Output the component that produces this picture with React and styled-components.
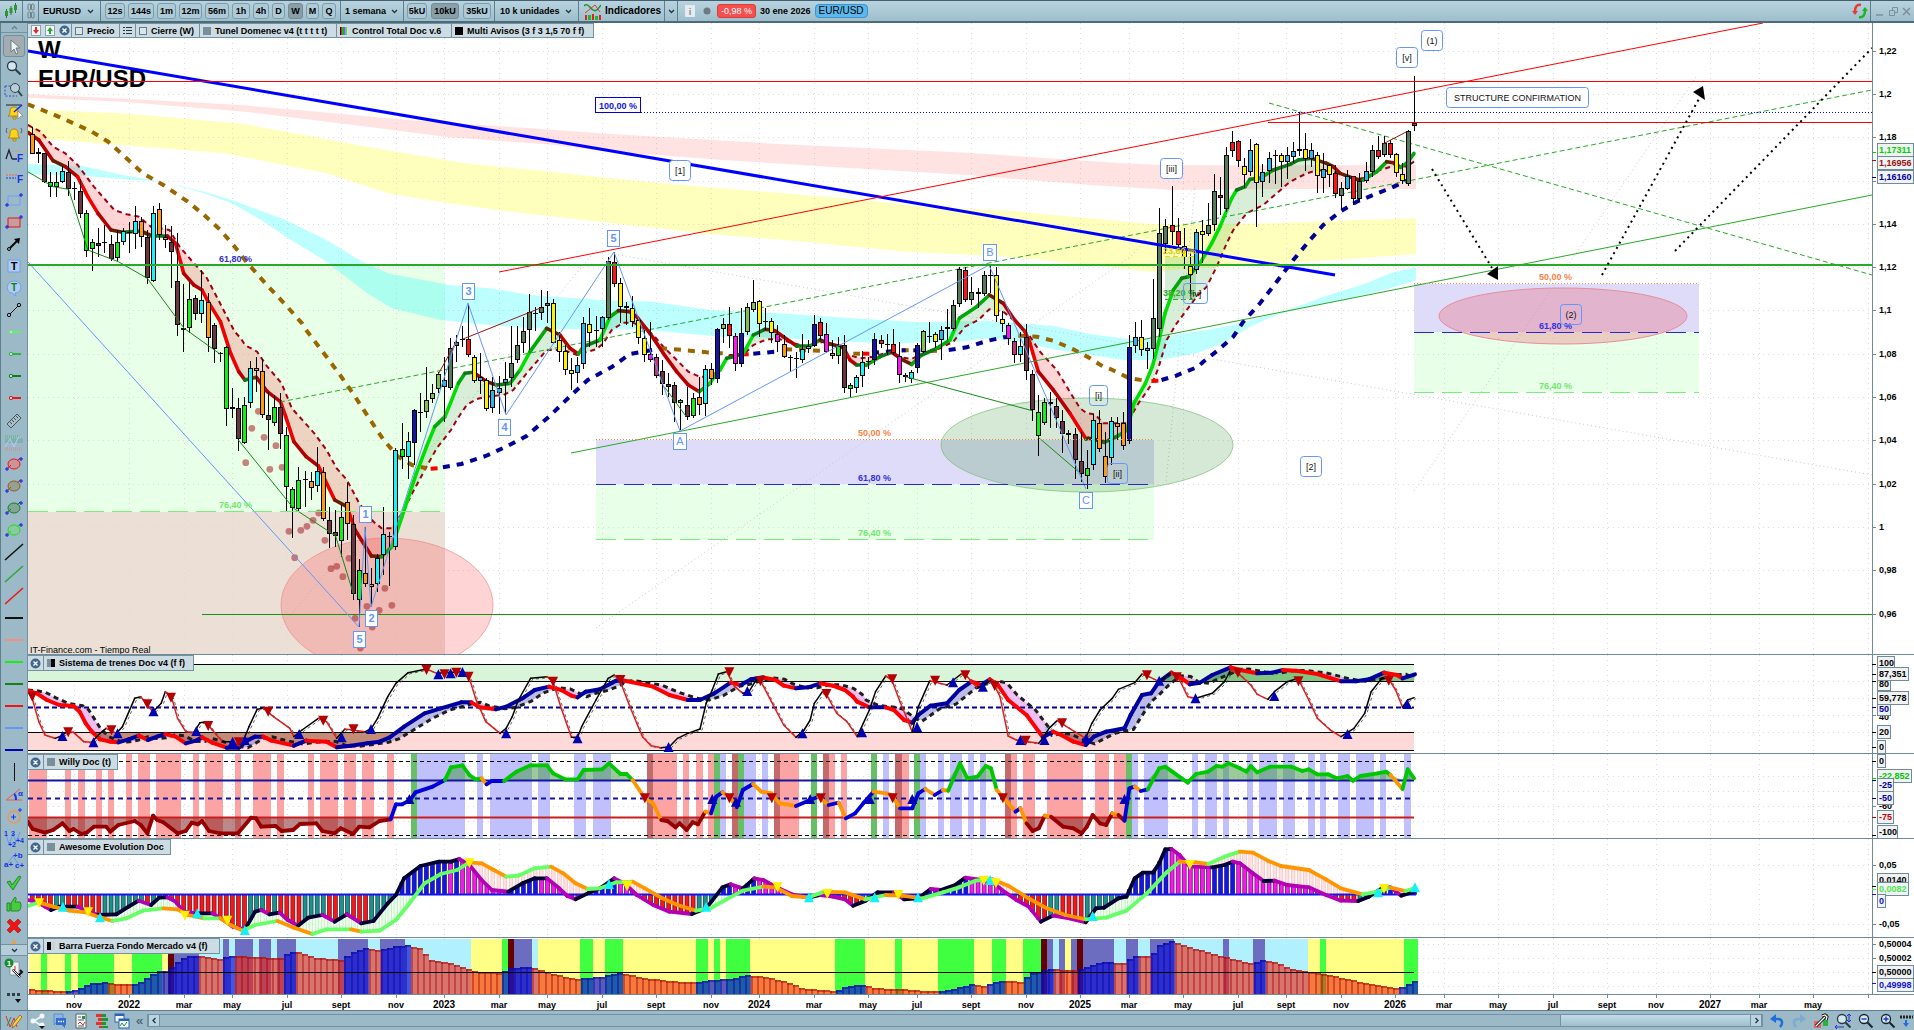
import React from "react";
import styled, { createGlobalStyle } from "styled-components";

const Global = createGlobalStyle`
  html, body, #root { margin: 0; height: 100%; }
  body { overflow: hidden; background: #fff; font-family: "Liberation Sans", Arial, sans-serif; }
  *, *::before, *::after { box-sizing: border-box; }
  button, select, input { font: inherit; color: inherit; margin: 0; padding: 0; border: 0; background: none; }
`;

/* ------------------------------------------------------------------ */
/* Plot data                                                           */
/* ------------------------------------------------------------------ */

// Vertical readings are kept in thirds of a pixel; each piece of a line has
// its own origin and horizontal scale.
const seg = (x0, y0, sx, text) =>
  text.trim().split(/\s+/).map((p) => {
    const [x, y] = p.split(",").map(Number);
    return [x0 + x / sx, y0 + y / 3];
  });
const A = (s) => seg(0, 0, 2.45, s);
const B = (s) => seg(600, 0, 2.45, s);
const C = (s) => seg(1274, 0, 2.45, s);
const D = (s) => seg(0, 330, 2.45, s);
const E = (s) => seg(560, 330, 2.178, s);
const G = (s) => seg(0, 650, 2.45, s);
const H = (s) => seg(600, 650, 2.45, s);
const I = (s) => seg(1240, 650, 2.326, s);
const J = (s) => seg(330, 200, 3, s);
const K = (s) => seg(720, 240, 3, s);
const L = (s) => seg(1090, 110, 3, s);

const spans = (x0, sx, text) =>
  text.trim().split(/\s+/).map((p) => {
    const [a, b] = p.split("-").map(Number);
    return [x0 + a / sx, x0 + b / sx];
  });

const join = (...parts) => parts.flat().sort((p, q) => p[0] - q[0]);
const str = (pts) => pts.map(([x, y]) => `${x.toFixed(1)},${y.toFixed(1)}`).join(" ");
const at = (line, x) => {
  if (x <= line[0][0]) return line[0][1];
  for (let i = 1; i < line.length; i++) {
    if (x <= line[i][0]) {
      const [ax, ay] = line[i - 1];
      const [bx, by] = line[i];
      return bx === ax ? by : ay + ((by - ay) * (x - ax)) / (bx - ax);
    }
  }
  return line[line.length - 1][1];
};

const X0 = 32.2;
const STEP = 6.063;
const COUNT = 229;
const barX = (i) => X0 + STEP * i;

const INK = {
  o: "#ff9914", b: "#6b3540", g: "#14f014", c: "#19f4fa", k: "#000000", n: "#1414a8",
  l: "#80c050", s: "#2cb6ee", d: "#557a5c", r: "#ff1414", y: "#fff200", m: "#ff14f0", p: "#c8327a",
};

// high, open/close top, open/close bottom, low, colour
const CANDLES = [
  [0, 0, "380,403,463,463,o 445,457,462,490,b 460,460,547,550,b 517,547,560,590,g 515,545,560,592,g 497,514,547,550,c 483,516,568,588,b 545,565,568,600,k 537,573,643,655,b 630,640,752,770,g 717,727,746,812,g 683,730,737,770,b 675,727,729,760,k 705,733,778,782,b 690,727,775,782,g 685,692,727,735,c 665,695,697,760,k 617,663,703,748,c 650,663,710,740,o 690,710,835,853,b 618,640,842,845,c 608,628,706,720,o 675,711,721,745,o 678,727,757,863,b 700,843,976,1007,b 852,983,989,1057,g 845,898,983,1000,g 885,895,943,960,b 810,901,941,970,c 880,907,1013,1057,o"],
  [30, 990, "-20,-14,58,100,b 65,70,73,97,k 47,52,238,287,g 173,231,238,263,g 205,233,328,364,b 200,226,338,342,g 93,115,220,235,c 82,114,124,185,o 87,124,256,263,o 187,255,271,360,b 195,231,280,288,g 190,231,313,358,b 290,316,472,542,g 472,478,535,623,g 410,451,538,543,g 423,446,451,530,b 425,452,475,510,o 350,424,469,487,c 412,427,566,573,o 530,571,613,655,b 540,607,619,650,b 525,561,634,680,g 460,515,583,630,o 555,583,793,810,b 687,720,811,890,g 590,730,761,770,o 715,763,772,830,o 672,683,763,785,c 530,613,676,735,c 607,617,622,768,o 355,361,652,660,c 278,356,380,417,g 305,334,382,448,c 238,241,340,405,n 190,246,249,305,k 110,211,247,263,l 162,190,208,220,l 125,132,178,190,l 80,149,172,275,s 25,53,173,180,d"],
  [70, 600, "405,427,439,486,d 378,416,419,442,k 313,418,466,470,r 465,472,542,550,y 460,532,544,582,s 535,539,628,633,y 532,571,625,640,s 527,565,580,642,s 485,538,550,642,s 378,490,535,560,d 378,436,479,490,d 350,394,430,460,d 282,336,391,450,d 320,339,342,393,k 270,322,340,360,d 273,310,319,370,d 297,310,430,432,y 395,421,457,487,y 435,454,511,525,y 475,511,523,570,y 470,496,520,550,s 350,370,493,506,s 323,371,400,440,y 348,389,392,440,k 348,352,388,440,s 170,184,353,360,d 155,187,251,262,r 235,250,322,370,y 305,318,325,375,y 288,325,367,380,y 350,360,415,432,y 390,415,466,485,y 367,463,479,485,m 463,472,527,535,p 480,514,553,585,b 518,553,561,590,b 545,556,609,665,b 597,601,610,690,g 560,616,652,660,b 580,595,649,655,g 530,592,615,645,o 495,508,613,648,c 490,508,538,555,o 385,388,538,548,n"],
  [114, 720, "235,253,268,308,l 200,253,289,325,r 280,289,371,392,m 205,280,373,380,n 190,202,277,285,l 120,187,211,215,l 180,184,251,292,y 205,244,247,270,k 235,244,280,310,y 255,283,307,335,m 285,313,352,355,o 345,350,353,395,k 335,354,357,413,k 283,328,359,368,c 300,317,328,340,c 225,253,317,320,n 233,247,287,300,r 250,283,337,340,m 300,338,349,358,o 290,319,349,373,g 285,316,445,458,b 430,436,448,470,g 405,412,443,458,c 332,367,409,440,c 350,362,365,388,k 280,298,361,375,n 285,299,313,325,r 283,312,315,345,k 268,313,340,345,r 305,349,406,428,m 400,406,412,427,o 390,397,416,430,c 310,316,385,400,n 270,274,337,340,l 247,288,291,310,k 277,283,307,325,y 258,271,301,360,s 207,262,268,300,r 180,196,268,272,d 82,88,193,200,d 82,91,181,185,r 110,157,181,195,d 145,157,163,205,r 92,106,163,168,d 75,106,109,160,k 80,106,229,245,y 213,238,253,275,y 250,256,298,315,m 295,304,346,370,p 275,319,346,365,c 253,292,394,420,b 390,403,511,543,b 465,517,589,647,g 475,487,550,555,g 455,487,493,563,b 475,499,535,565,b 510,544,583,640,b 570,580,586,613,b 565,583,661,716,b 575,664,703,725,b 630,685,709,748,g 522,541,676,690,c 510,550,628,635,o 575,649,712,728,o 530,544,655,675,c 530,550,562,600,o"],
  [180, 990, "247,280,349,360,o 15,52,334,342,n"],
  [182, 330, "637,682,709,730,s 630,680,721,738,y 697,715,724,777,s 507,625,718,747,d 293,370,658,680,d 327,349,402,428,d 228,346,367,405,r 323,364,405,410,r 353,408,442,477,y 430,469,496,552,y 357,367,481,492,s 330,364,376,460,y 278,346,373,378,d 192,244,346,362,d 200,256,265,315,r 112,136,298,307,d 63,97,124,140,r 90,94,154,172,r 145,169,196,235,y 88,121,187,198,s 100,103,220,350,y 163,187,217,260,s 127,145,184,220,s 120,134,137,222,k 130,136,157,230,y 110,136,157,207,s 95,124,142,158,s 7,118,124,137,r 70,118,148,183,y 98,121,146,170,s 127,136,199,250,y 130,178,205,250,s 162,166,195,230,y 165,190,253,265,r 215,235,259,298,d 180,199,238,240,s 197,199,268,285,r 190,214,268,276,d 157,184,214,220,s 105,121,187,202,d 78,121,142,147,r 78,100,136,142,d 90,100,136,145,r 130,133,190,200,y 160,193,214,222,y 60,64,223,228,d -102,38,49,62,r"],
].flatMap(([from, base, rows]) =>
  rows.split(" ").map((r, k) => {
    const [h, t, b, l, ink] = r.split(",");
    const y = (v) => Math.round((base + Number(v)) / 3);
    return { x: Math.floor(barX(from + k)), h: y(h), t: y(t), b: y(b), l: y(l), ink: INK[ink] };
  })
);

const FAST = join(
  A("68,397 95,420 130,482 160,500 190,530 215,590 240,640 272,690 300,697 345,693 372,708 410,708 430,730 450,820 475,855 495,870 510,905 540,965"),
  D("565,70 585,125 600,150 628,142 655,185 687,215 700,260 720,335 750,380 780,408 820,510 850,530 870,600 910,678 935,680 960,650 985,560 1020,430 1045,350 1065,290"),
  J("345,650 385,550 405,520 430,517 470,545 500,555 540,550 570,510 600,455 650,385 690,405 720,445 745,462 760,440 810,420 840,350 865,332 900,335 920,350 960,400 1000,460 1040,515 1075,555 1108,575 1140,550 1165,510"),
  K("0,390 20,355 40,350 70,340 100,285 135,268 165,272 190,290 230,318 270,318 300,300 330,312 370,322 390,360 410,375 440,375 480,350 515,337 545,358 575,373 605,345 650,325 690,300 718,235 770,200 808,165 850,190 880,235 915,275 930,310 955,395 1000,450 1050,520 1098,597 1120,597"),
  E("1150,325 1185,337 1215,318 1235,300 1250,220 1275,160 1290,110"),
  L("195,740 205,700 225,610 250,540 275,505 295,500 330,460 365,400 390,350 425,265 440,240 465,230 480,208 510,205 550,180 600,163 625,150 665,145 710,160 730,170 750,190 800,208 820,210 860,185 890,155 910,158 932,172 950,160 972,130")
);

const SLOW = join(
  A("68,375 100,395 130,440 160,460 190,495 230,560 280,630 310,643 340,650 370,680 415,690 440,740 475,790 505,830 535,900 560,960 575,995"),
  D("590,25 600,45 630,65 655,110 690,160 715,235 770,310 800,360 825,415 850,450 880,520 915,575 935,595 960,595 985,550 1010,490 1045,410 1070,355 1105,300"),
  J("380,660 410,615 440,597 470,590 520,585 550,570 590,520 650,450 700,450 740,465 800,447 820,430 845,390 880,368 910,368 940,385 970,405 1000,440 1040,480 1075,515 1108,530 1140,530 1165,510"),
  K("0,380 30,345 70,345 100,315 140,298 180,298 220,310 260,320 310,305 350,315 380,343 420,355 460,350 510,335 550,353 575,357 610,340 660,325 700,305 735,260 775,240 808,208 850,215 900,255 930,290 960,335 1010,390 1040,440 1080,505 1100,520 1125,523 1150,550"),
  E("1190,280 1235,280 1260,220 1290,160"),
  L("205,775 230,690 260,640 290,600 320,560 350,530 380,470 410,400 430,360 470,310 520,285 560,250 600,215 650,190 685,180 730,185 790,205 820,205 870,180 920,165 950,170 972,155")
);

const BROWN = "#996600";
const NAVY = "#000096";
const LONG = [
  [BROWN, join(A("68,313 130,343 180,370 225,395 265,425 310,475 350,520 400,555 460,605 500,645 540,690 575,740 600,780 650,850 700,915 740,970"), D("750,0 800,80 830,130 870,200 910,275 940,330 975,380 1010,405 1045,415"))],
  ["#ff0000", D("1055,416 1078,414")],
  [NAVY, join(D("1085,412 1130,402 1190,378 1240,350 1290,318 1345,260 1400,195 1440,150 1500,110"), J("900,462 985,447"))],
  [BROWN, join(J("990,445 1060,450 1130,457"), K("0,340 12,340"))],
  ["#ff0000", K("66,343 86,343")],
  [NAVY, K("100,341 165,335")],
  [BROWN, K("195,328 300,332")],
  [BROWN, K("400,341 420,341")],
  ["#ff0000", K("428,341 448,341")],
  [NAVY, K("456,338 525,333")],
  [BROWN, K("545,331 600,331")],
  [NAVY, K("545,331 557,331")],
  [NAVY, K("580,331 605,331")],
  [BROWN, K("630,333 660,332")],
  [NAVY, K("686,330 740,322 800,303 850,292 890,290")],
  [BROWN, join(K("895,287 950,290 1000,302 1060,328 1110,355 1150,380"), E("1200,118 1240,145 1280,153"))],
  ["#ff0000", E("1288,153 1306,152")],
  [NAVY, join(E("1310,150 1340,138 1390,110"), L("340,755 385,720 430,680 460,635 510,580 560,515 610,450 660,390 700,345 750,305 800,275 850,255 900,235 950,212"))],
];

const BANDS = [
  ["rgba(255,90,90,.17)",
    join(A("68,283 320,297 590,315 820,340 1000,360 1300,385"), B("0,400 450,433 900,458 1280,490 1400,496"), C("0,496 348,496")),
    join(A("68,293 300,305 600,335 900,380 1100,412 1360,435"), B("0,452 300,480 600,503 900,525 1200,555 1400,570"), C("0,567 348,567"))],
  ["rgba(255,255,0,.26)",
    join(A("68,328 300,340 600,372 900,440 1140,490 1350,515"), B("0,532 250,560 600,595 800,620 1000,632 1200,655 1350,672"), C("0,670 200,660 348,655")),
    join(A("68,413 350,440 550,460 800,520 950,580 1100,610 1250,635"), B("0,665 250,700 500,725 750,755 1000,770 1200,795 1350,815"), C("0,790 150,780 348,762"))],
  ["rgba(0,255,255,.26)",
    join(A("68,492 200,497 300,525 400,545 500,575 568,600 700,660 800,720 880,780 950,820 1100,855 1200,865 1300,885"), B("0,900 130,905 270,930"), K("180,220 400,235 600,247 800,242 1000,258"), L("0,672 120,688 200,688 250,675 350,660 430,645 570,608 650,580 700,560 830,520 900,490 978,472")),
    join(A("68,523 200,527 300,537 400,545 500,580 568,610 640,660 700,710 800,785 900,880 960,925 1080,960 1200,975 1300,985"), B("0,990 100,988"), K("0,290 150,293 300,300 520,312 620,305 700,307 808,295 900,305 1000,328"), L("0,735 100,750 210,750 320,730 400,700 480,650 560,615 650,590 800,560 900,535 978,512"))],
];

const TRAIN = join(
  G("68,122 90,130 115,150 145,165 180,168 195,185 210,220 225,245 245,268 270,275 290,277 315,268 340,257 362,270 385,260 405,252 430,260 455,280 480,272 495,262 520,278 555,293 585,293 605,272 625,260 645,260 665,272 720,287 750,272 800,275 825,292 860,287 900,280 930,275 955,262 990,230 1040,190 1080,175 1130,157 1155,157 1175,172 1215,178 1240,170 1280,145 1310,120 1345,110 1375,120 1400,137 1415,142 1435,125 1470,118 1500,98 1530,92"),
  H("40,92 80,97 130,110 170,135 215,150 245,150 280,130 320,98 345,105 370,88 400,82 430,90 450,107 480,115 510,112 540,100 570,107 600,120 620,140 630,155 660,172 700,172 720,180 745,210 765,218 780,195 810,167 850,160 880,120 910,95 935,105 955,88 975,105 1000,150 1045,195 1075,245 1085,262 1110,245 1130,255 1160,275 1190,285 1210,260 1240,245 1285,235 1300,195 1328,135 1350,130 1370,95 1400,68 1425,85 1445,103 1470,98 1500,75 1545,52"),
  I("0,60 40,70 75,68 100,60 130,62 180,72 235,94 270,94 300,88 335,68 365,75 378,85 407,73")
);
const TRAIN_LAG = join([[28, 690]], TRAIN.map(([x, y], i) => {
  const n = TRAIN[Math.max(0, i - 1)];
  return [x + 9, (y * 2 + n[1]) / 3];
}).filter(([x]) => x < 1415));
const CYCLE = join(
  G("68,122 80,150 95,215 110,255 135,265 150,258 165,245 180,247 205,275 225,277 245,250 260,235 285,250 300,230 330,145 345,140 360,165 375,185 395,160 405,125 420,140 435,205 455,245 475,247 490,218 505,215 520,240 545,275 570,275 590,290 610,230 630,178 645,175 670,200 710,235 720,260 740,240 780,205 800,215 825,265 845,237 895,245 910,235 925,205 950,140 970,100 1000,68 1045,57 1070,70 1130,65 1150,85 1165,145 1190,215 1225,250 1240,235 1255,200 1270,150 1300,85 1340,80 1355,95 1375,175 1400,262 1415,262 1425,230 1460,150"),
  H("20,85 35,75 50,95 70,160 90,220 105,262 125,287 150,293 170,290 190,265 215,250 245,237 260,160 275,120 290,72 310,65 330,110 350,130 365,125 380,95 390,85 420,155 450,225 480,262 500,240 515,210 525,160 545,125 560,145 580,190 605,215 630,260 645,220 660,180 675,125 700,78 715,90 735,155 765,245 780,170 808,92 850,105 885,72 900,80 925,115 960,90 980,140 1000,258 1020,270 1075,280 1085,265 1100,235 1120,212 1150,235 1190,265 1205,220 1225,180 1255,145 1270,118 1310,98 1328,72 1345,80 1370,95 1400,68 1420,90 1440,140 1460,145 1500,130 1530,95 1545,60"),
  I("0,75 25,105 40,133 65,148 80,125 110,95 135,85 160,150 180,205 210,240 235,260 265,235 290,190 305,125 330,85 345,85 362,120 378,172 390,150 405,143")
);
const TRAIN_DOWN = join(G("79,140 167,247 273,241 361,163 419,143 510,228 585,277 657,185 792,212 866,238 1045,60 1089,73 1118,68 1148,80 1355,95 1520,90"), H("317,67 393,93 555,132 716,88 821,92 895,76 967,108 1043,272 1132,220 1340,76 1413,82 1563,68"), I("136,94 346,92"));
const TRAIN_UP = join(G("153,258 229,277 288,250 376,184 481,243 570,275 600,270 733,252 837,262 909,237 1074,73 1104,70 1133,66 1240,250 1415,265"), H("168,291 361,123 496,250 642,247 777,231 865,97 938,110 1030,270 1089,270 1191,265 1370,92 1459,145"), I("80,138 250,252 389,162"));

const WILLY = join(
  G("68,515 80,537 110,548 130,540 153,520 170,543 180,537 200,552 212,548 230,530 260,530 270,545 290,525 330,513 345,525 361,550 375,497 385,510 400,517 435,550 455,543 470,518 485,523 495,513 512,543 540,550 583,550 615,503 627,505 640,530 675,528 690,543 718,540 735,522 775,520 790,543 820,550 835,535 865,552 880,530 905,532 930,513 957,508 970,463 985,463 1005,450 1018,427 1060,410 1090,390 1105,352 1133,346 1150,375 1165,388 1180,385 1192,403 1205,393 1235,393 1265,365 1300,346 1340,346 1355,370 1385,388 1415,388 1430,360 1475,358"),
  H("22,340 50,372 65,372 80,390 110,445 130,460 150,510 165,513 185,532 195,520 212,540 227,517 240,523 258,485 272,490 285,440 300,427 320,445 335,472 350,420 375,402 395,425 420,430 440,460 480,468 515,450 535,440 560,465 585,458 602,505 625,490 645,460 670,425 700,430 715,435 735,475 765,475 780,430 797,417 820,435 840,420 853,422 882,340 900,385 925,380 945,348 958,355 972,420 990,445 1018,485 1030,475 1045,520 1060,543 1075,535 1090,497 1105,500 1135,530 1160,535 1180,550 1193,530 1207,495 1225,520 1240,525 1255,490 1270,495 1285,512 1297,415 1310,410 1325,423 1342,418 1370,355 1385,350 1425,385 1440,398 1460,372 1490,365 1510,348 1525,350 1540,340"),
  I("0,355 15,365 25,348 40,367 70,350 120,350 145,363 160,358 180,373 205,373 225,385 250,378 263,392 280,378 320,370 340,365 350,375 378,417 390,358 405,385")
);
const WILLY_BARS = [
  ["#fca4a4", [...spans(0, 2.45, "70-115 159-174 191-208 235-250 265-279 309-323 338-367 382-443 473-488 502-546 575-590 620-664 679-696 755-769 784-828 843-872 887-916 948-965"), ...spans(600, 2.45, "130-189 203-218 235-252 265-279 441-488 561-576 590-605 740-757 1007-1022 1036-1066 1095-1183 1213-1247 1259-1289")]],
  ["#c0c0fc", [...spans(0, 2.45, "1022-1139 1169-1183 1200-1303 1318-1347 1406-1436 1453-1497"), ...spans(600, 2.45, "294-309 353-382 397-412 693-708 784-799 828-843 858-887 902-916 931-946 1303-1318 1333-1392 1450-1465 1482-1512 1526-1541"), ...spans(1240, 2.326, "16-30 44-86 100-128 158-174 186-200 228-256 270-312 326-340 382-398")]],
  ["#66c066", [...spans(0, 2.45, "1007-1022"), ...spans(600, 2.45, "279-294 338-353 517-532 664-679 769-784 1289-1303")]],
  ["#c46a6a", spans(600, 2.45, "115-130 323-338 426-441 546-561 723-740 992-1007")],
];

const AO = join(
  G("68,750 90,755 110,770 125,780 145,770 190,770 215,783 240,795 285,793 315,770 340,752 370,765 390,743 410,742 430,755 450,785 480,790 520,790 550,812 570,830 600,838 625,785 640,780 660,793 685,788 705,810 730,827 755,803 790,795 820,815 850,793 885,820 915,813 950,760 970,735 990,685 1030,648 1075,635 1105,635 1125,627 1150,645 1180,690 1205,720 1245,725 1280,700 1310,685 1340,685 1370,715 1390,738 1410,748 1440,730"),
  H("0,715 35,685 60,700 90,735 130,765 170,785 225,792 260,775 300,712 320,703 350,715 378,685 400,690 430,710 470,733 510,743 540,735 570,740 600,748 620,767 650,753 680,727 720,727 745,748 780,745 810,717 835,720 870,705 895,683 935,690 960,695 985,720 1020,750 1050,770 1080,815 1110,797 1150,805 1190,817 1215,775 1235,773 1270,745 1290,740 1310,685 1330,668 1355,668 1370,640 1385,598 1400,597 1420,615 1445,650 1500,652 1530,645 1550,635"),
  I("0,640 30,670 55,693 80,692 110,705 160,712 200,735 235,752 275,753 300,740 330,715 350,712 375,737 405,725")
);
const AO_SIGNAL = join(
  G("68,768 95,757 130,770 170,782 210,787 240,800 275,813 310,805 350,782 400,775 435,778 460,795 500,805 540,805 565,825 595,842 625,825 680,813 720,833 765,852 800,838 860,838 885,845 930,842 970,810 1000,765 1040,700 1080,672 1120,660 1150,637 1180,640 1210,660 1240,680 1270,677 1310,655 1350,650 1380,670 1410,700 1440,717"),
  H("0,715 40,697 80,695 110,715 150,743 190,765 235,782 270,775 310,748 350,722 400,710 430,712 470,738 510,742 550,725 600,727 650,748 700,735 740,737 790,745 840,727 880,712 920,692 960,687 1000,707 1050,745 1095,775 1140,795 1190,808 1240,803 1290,782 1340,730 1390,665 1420,635 1460,637 1490,642 1530,620"),
  I("0,605 30,608 65,632 95,648 160,660 200,688 235,715 285,733 320,725 350,713 385,723 405,715")
);
const AO_UP = join(G("154,770 245,802 483,790 600,840 1492,702"), H("260,770 512,742 673,742 779,742 956,690 1207,798"), I("321,727 407,712"));
const AO_DOWN = join(G("96,760 216,787 453,797 557,812 1150,640 1537,707"), H("66,708 435,712 557,732 731,735 940,692 970,700 1445,645"), I("335,717"));

const FORCE = join(
  G("70,1018 115,1020 155,1023 190,1020 205,1010 225,1000 260,997 300,1003 330,1003 350,995 370,975 385,965 412,962 430,940 455,920 490,918 540,928 565,917 620,920 690,925 710,905 735,907 770,922 840,930 865,905 895,895 930,900 965,890 1000,885 1030,895 1060,930 1110,940 1140,955 1170,965 1230,968 1250,955 1300,950 1330,962 1370,975 1410,987 1440,983"),
  H("0,982 20,975 55,968 90,980 160,992 235,998 270,990 320,987 360,975 400,980 450,992 500,1015 580,1023 600,1010 640,1003 680,1015 740,1017 830,1025 870,1015 910,1003 945,1007 975,993 1030,995 1060,970 1100,957 1160,960 1180,957 1210,943 1250,935 1285,940 1310,917 1350,920 1370,885 1400,873 1430,885 1500,910"),
  I("0,932 30,940 50,930 80,935 120,955 165,967 200,972 260,990 320,1005 375,1015 383,1007 395,1000 405,993 414,993")
);
const FORCE_BACK = [
  ["#ffff85", [...spans(0, 2.45, "70-412 1154-1230 1318-1470"), ...spans(600, 2.45, "0-1080 1139-1154"), ...spans(1240, 2.326, "158-382")]],
  ["#b0f0ff", [...spans(0, 2.45, "487-1154 1303-1318"), ...spans(600, 2.45, "1110-1125 1259-1568"), ...spans(1240, 2.326, "0-158")]],
  ["#40ff40", [...spans(0, 2.45, "100-115 159-174 191-279 323-397 1230-1245 1421-1453"), ...spans(600, 2.45, "12-56 235-265 279-294 309-367 576-649 723-740 828-916 960-995 1036-1080"), ...spans(1240, 2.326, "186-200 382-414")]],
  ["#6c6cc0", [...spans(0, 2.45, "426-487 546-561 576-620 635-664 679-725 828-902 931-992 1259-1303"), ...spans(600, 2.45, "1095-1110 1125-1139 1154-1169 1183-1259 1289-1318 1347-1406 1526-1541"), ...spans(1240, 2.326, "30-58")]],
  ["#660000", [...spans(0, 2.45, "412-426 1245-1259"), ...spans(600, 2.45, "1080-1095 1169-1183")]],
];

const MONTHS = [
  [74, "nov"], [129, "2022"], [184, "mar"], [232, "may"], [287, "jul"], [341, "sept"], [396, "nov"], [444, "2023"], [499, "mar"], [547, "may"], [602, "jul"],
  [656, "sept"], [711, "nov"], [759, "2024"], [814, "mar"], [868, "may"], [917, "jul"], [971, "sept"], [1026, "nov"], [1080, "2025"], [1129, "mar"], [1183, "may"], [1238, "jul"],
  [1286, "sept"], [1341, "nov"], [1395, "2026"], [1444, "mar"], [1498, "may"], [1553, "jul"], [1607, "sept"], [1656, "nov"], [1710, "2027"], [1759, "mar"], [1813, "may"], [1868, ""],
];
const RIGHT = 1872;

/* ------------------------------------------------------------------ */
/* Layout                                                              */
/* ------------------------------------------------------------------ */

const Page = styled.div`
  display: flex;
  flex-direction: column;
  height: 100vh;
  color: #000;
  font-size: 9px;
  font-weight: 700;
  line-height: 12px;
`;
const Toolbar = styled.header`
  display: flex;
  align-items: center;
  flex: none;
  height: 23px;
  border-top: 1px solid #44606e;
  border-bottom: 2px solid #4d6a78;
  background: linear-gradient(#b9d3e0, #9dbecb);
  font-size: 9px;
  overflow: hidden;
`;
const Group = styled.div`
  display: flex;
  align-items: center;
  justify-content: ${(p) => p.$justify || "flex-start"};
  flex: none;
  gap: ${(p) => p.$gap || 0}px;
  width: ${(p) => (p.$w ? `${p.$w}px` : "auto")};
  height: 100%;
  padding: 0 ${(p) => (p.$pad === undefined ? 3 : p.$pad)}px;
  border-right: ${(p) => (p.$plain ? "0" : "1px solid #5f7f8e")};
`;
const Spring = styled.div`flex: 1;`;
const Chip = styled.button`
  flex: none;
  min-width: ${(p) => p.$w}px;
  height: 16px;
  border: 1px solid ${(p) => (p.$on ? "#748c98" : "#7d9cab")};
  border-radius: 3px;
  background: ${(p) => (p.$on ? "#8a9ea8" : "#aecad7")};
  font-weight: 700;
  line-height: 12px;
  text-align: center;
`;
const PickBox = styled.label`
  position: relative;
  display: flex;
  align-items: center;
  width: ${(p) => p.$w}px;
  height: 100%;
  svg { position: absolute; right: 5px; top: 7px; pointer-events: none; }
`;
const Pick = styled.select`
  appearance: none;
  width: 100%;
  height: 16px;
  padding-left: 4px;
  font-size: 9px;
  font-weight: 700;
`;
const IconButton = styled.button`
  display: flex;
  align-items: center;
  justify-content: center;
  flex: none;
  width: ${(p) => p.$w || 22}px;
  height: ${(p) => p.$h || 18}px;
`;
const TextButton = styled.button`
  display: flex;
  align-items: center;
  gap: 4px;
  height: 18px;
  font-size: 10px;
  font-weight: 700;
`;
const Change = styled.span`
  height: 14px;
  padding: 0 3px;
  border: 1px solid #e03c3c;
  border-radius: 3px;
  background: #f55050;
  color: #fff;
  font-weight: 400;
  line-height: 12px;
`;
const Ticker = styled.span`
  height: 14px;
  padding: 0 3px;
  border: 1px solid #3a94c8;
  border-radius: 4px;
  background: #5cb8ec;
  font-size: 10px;
  font-weight: 400;
  line-height: 12px;
`;
const When = styled.time`font-size: 9px;`;
const Body = styled.div`
  display: flex;
  flex: 1;
  min-height: 0;
`;
const Side = styled.nav`
  display: flex;
  flex-direction: column;
  flex: none;
  width: 28px;
  border-left: 1px solid #5f7f8e;
  border-right: 1px solid #7391a0;
  background: #9cb9c7;
`;
const SideArrow = styled.button`
  display: flex;
  align-items: center;
  justify-content: center;
  flex: none;
  height: ${(p) => p.$h}px;
  border-bottom: 1px solid #7391a0;
  border-top: ${(p) => (p.$raised ? "1px solid #7391a0" : "0")};
  background: ${(p) => (p.$raised ? "#b4cdd9" : "transparent")};
`;
const Tools = styled.div`
  display: flex;
  flex-direction: column;
  flex: 1;
  min-height: 0;
  padding-top: 2px;
  overflow: hidden;
`;
const Tool = styled.button`
  display: flex;
  align-items: center;
  justify-content: center;
  flex: none;
  height: ${(p) => p.$h || 22}px;
  margin: 0 2px;
  border: ${(p) => (p.$on ? "1px solid #748f9b" : "0")};
  border-radius: 3px;
  background: ${(p) => (p.$on ? "#a3adb1" : "none")};
`;
const PencilTool = styled(Tool)`
  margin: 0;
  border-top: 1px solid #5f7f8e;
  border-radius: 0;
`;
const Main = styled.main`
  display: flex;
  flex-direction: column;
  flex: 1;
  min-width: 0;
`;
const Panel = styled.section`
  position: relative;
  flex: ${(p) => p.$grow} 1 0;
  min-height: 0;
  overflow: hidden;
`;
const Plot = styled.svg`
  display: block;
  width: 100%;
  height: 100%;
  font-family: "Liberation Sans", Arial, sans-serif;
  font-weight: 400;
`;
const Legend = styled.div`
  position: absolute;
  top: 0;
  left: 0;
  display: flex;
  height: ${(p) => p.$h}px;
  border: 1px solid #7391a0;
  border-left: 0;
  background: #cddbe3;
`;
const LegendCell = styled.div`
  display: flex;
  align-items: center;
  gap: 4px;
  width: ${(p) => p.$w}px;
  padding-left: ${(p) => p.$pad || 3}px;
  border-right: 1px solid #7391a0;
  white-space: nowrap;
  &:last-child { border-right: 0; }
`;
const LegendButton = styled.button`
  display: flex;
  padding: 0;
`;
const Check = styled.input`
  appearance: none;
  width: 8px;
  height: 8px;
  border: 1px solid #5f7f8e;
  background: #dbe6ec;
`;
const CheckLabel = styled.label`
  display: flex;
  align-items: center;
  gap: 4px;
`;
const Swatch = styled.i`
  flex: none;
  width: 8px;
  height: 8px;
  background: ${(p) => p.$fill};
`;
const Footer = styled.footer`
  display: flex;
  align-items: center;
  flex: none;
  height: 20px;
  border-top: 1px solid #5f7f8e;
  background: #9cb9c7;
  font-size: 13px;
  font-weight: 400;
  color: #33505e;
`;
const Scroll = styled.div`
  display: flex;
  flex: 1;
  min-width: 0;
  height: 13px;
  margin-right: 3px;
  border: 1px solid #7391a0;
  background: #9cb9c7;
`;
const ScrollEnd = styled.button`
  display: flex;
  align-items: center;
  justify-content: center;
  flex: none;
  width: 12px;
  background: #b9d3e0;
  border-left: 1px solid #7391a0;
  border-right: 1px solid #7391a0;
`;
const ScrollTrack = styled.div`flex: 74;`;
const ScrollThumb = styled.div`
  flex: 10;
  border-left: 1px solid #7391a0;
  background: linear-gradient(#c2dce8, #9fbfcc);
`;

/* ------------------------------------------------------------------ */
/* Icons                                                               */
/* ------------------------------------------------------------------ */

const Ico = ({ w = 20, h = 18, children }) => (
  <svg width={w} height={h} viewBox={`0 0 ${w} ${h}`} fill="none" aria-hidden="true">{children}</svg>
);
const Chevron = ({ up, side, c = "#23343c" }) => (
  <svg width="7" height="7" viewBox="0 0 7 7" fill="none" aria-hidden="true">
    <path d={side === "left" ? "M4.5 1 2 3.5 4.5 6" : side === "right" ? "M2.5 1 5 3.5 2.5 6" : up ? "M1 5 3.5 2.5 6 5" : "M1 2 3.5 4.5 6 2"} stroke={c} strokeWidth="1.3" />
  </svg>
);
const Segment = ({ c }) => <Ico><path d="M8 9h9" stroke={c} strokeWidth="2" /><circle cx="7" cy="9" r="1.7" stroke={c} fill="#c8dde6" /></Ico>;
const Slash = ({ c }) => <Ico><path d="M1 17 19 1" stroke={c} strokeWidth="1.5" /></Ico>;
const Dash = ({ c }) => <Ico><path d="M1 9h18" stroke={c} strokeWidth="2" /></Ico>;
const Corners = () => <path d="M1 14h4M3 12v4M15 4h4M17 2v4" stroke="#1414e6" />;
const Oval = ({ c, f }) => <Ico><ellipse cx="10" cy="9" rx="6" ry="5" stroke={c} fill={f} /><path d="M4 13l3-3M13 6l3-3" stroke={c} /><Corners /></Ico>;
const Bell = () => <path d="M4 13c2-1 2-3 2-5 0-3 2-4 4-4s4 1 4 4c0 2 0 4 2 5z M9 14h3v2H9z" fill="#ffd21e" stroke="#a07800" strokeWidth=".8" />;
const Lens = ({ sign, c = "#2b3b42" }) => (
  <><circle cx="8" cy="7" r="4.5" fill="#d4e6ef" stroke={c} strokeWidth="1.3" /><path d="m11.500 10.500 5 5" stroke={c} strokeWidth="2" />
    {sign && <path d={sign === "+" ? "M5.500 7h5M8 4.500v5" : "M5.500 7h5"} stroke="#1e32d2" strokeWidth="1.4" />}</>
);

const TOOLS = [
  ["Puntero", <Ico><path d="M7 3v12l3-3 2 5 2-1-2-5h4z" fill="#eef3f5" stroke="#6d7c84" /></Ico>],
  ["Lupa", <Ico><Lens /></Ico>],
  ["Zoom de zona", <Ico><path d="M1 5h6M1 5v10h12" stroke="#2350d2" strokeDasharray="2 1.500" /><circle cx="11" cy="7" r="4.500" fill="#b9ced8" stroke="#33444c" /><path d="m14 10 4 5" stroke="#33444c" strokeWidth="2" /></Ico>],
  ["Crear alerta", <Ico><path d="M2 2h16" stroke="#222" /><Bell /><path d="m10 9 8-7" stroke="#1432e6" strokeWidth="1.500" /><path d="M14 8v8l3-3h2z" fill="#fff" stroke="#777" strokeWidth=".6" /></Ico>],
  ["Alertas", <Ico><Bell /><path d="M3 3c-1 2-1 3 0 5M17 3c1 2 1 3 0 5" stroke="#555" /></Ico>],
  ["Fibonacci extensión", <Ico><path d="m2 12 3-9 3 9M8 12h5" stroke="#223" strokeWidth="1.300" /><path d="M8 4h10" stroke="#f08c64" strokeDasharray="2 1" /><text x="13" y="15" fontSize="10" fontWeight="700" fill="#1432e6">F</text></Ico>],
  ["Fibonacci retroceso", <Ico><path d="M2 6h12" stroke="#f06432" strokeDasharray="2 1" /><path d="M2 9h10" stroke="#1432e6" strokeDasharray="2 1" /><text x="13" y="14" fontSize="10" fontWeight="700" fill="#1432e6">F</text></Ico>],
  ["Rectángulo azul", <Ico><path d="M4 5h12v9H4z" stroke="#6e9ef5" /><Corners /></Ico>],
  ["Rectángulo rojo", <Ico><path d="M4 5h12v9H4z" stroke="#e61414" fill="#d29696" fillOpacity=".8" /><Corners /></Ico>],
  ["Flecha", <Ico><circle cx="5" cy="14" r="1.500" stroke="#000" /><path d="m6 13 7-7" stroke="#000" strokeWidth="2" /><path d="m10 4 6-1-1 6z" fill="#000" /></Ico>],
  ["Texto", <Ico><path d="M4 3h12v12H4z" fill="#b0cdf0" stroke="#6e9ef5" /><text x="10" y="13" fontSize="11" fontWeight="700" textAnchor="middle" fill="#000">T</text></Ico>],
  ["Texto en globo", <Ico><path d="M10 2c9 0 9 12 1 12l1 3-4-3C1 13 2 2 10 2z" fill="#b0cdf0" stroke="#6e9ef5" /><text x="10" y="12" fontSize="10" fontWeight="700" textAnchor="middle" fill="#0a8214">T</text></Ico>],
  ["Segmento", <Ico><circle cx="5" cy="14" r="1.700" stroke="#111" /><circle cx="15" cy="4" r="1.700" stroke="#111" /><path d="m6 13 8-8" stroke="#111" /></Ico>],
  ["Semirrecta verde claro", <Segment c="#64f064" />],
  ["Semirrecta verde", <Segment c="#32b43c" />],
  ["Semirrecta verde oscuro", <Segment c="#0a8214" />],
  ["Semirrecta roja", <Segment c="#f01414" />],
  ["Regla", <Ico><path d="m3 13 10-10 4 4L7 17z" stroke="#44565e" fill="#a9bcc5" /><path d="m6 11 2 2m0-4 2 2m0-4 2 2m0-4 2 2" stroke="#44565e" /></Ico>],
  ["Canal", <Ico><path d="M1 3h18M1 5h18" stroke="#50b478" strokeDasharray="1 1" /><path d="M1 6h18v4H1z" fill="#64aa8c" fillOpacity=".5" /><path d="m1 14 5-8 4 8 4-9 4-2" stroke="#b4c8ff" /><path d="M1 15h18M1 17h18" stroke="#e68282" strokeDasharray="1 1" /></Ico>],
  ["Elipse roja", <Oval c="#f01414" f="#c89696" />],
  ["Elipse marrón", <Oval c="#965a28" f="#96a08c" />],
  ["Elipse verde oscuro", <Oval c="#148228" f="#82a596" />],
  ["Elipse verde", <Oval c="#14e614" f="#8cc8a0" />],
  ["Línea negra", <Slash c="#111" />],
  ["Línea verde", <Slash c="#28aa32" />],
  ["Línea roja", <Slash c="#f01414" />],
  ["Horizontal negra", <Dash c="#111" />],
  ["Horizontal salmón", <Dash c="#fa8c78" />],
  ["Horizontal verde claro", <Dash c="#14f014" />],
  ["Horizontal verde oscuro", <Dash c="#148214" />],
  ["Horizontal roja", <Dash c="#f01414" />],
  ["Horizontal azul", <Dash c="#6496fa" />],
  ["Horizontal azul oscuro", <Dash c="#0000b4" />],
  ["Vertical", <Ico><path d="M10.500 0v18" stroke="#111" /></Ico>],
  ["Ángulo", <Ico><path d="M16 4 2 15h16" stroke="#f05a50" /><path d="M10 9c2 1 2 4 2 6" stroke="#1432e6" strokeWidth="2" /><text x="14" y="11" fontSize="8" fill="#1432e6">α</text></Ico>],
  ["Ciclo", <Ico><circle cx="10" cy="10" r="6" stroke="#f09650" strokeWidth="1.300" /><path d="M7 10h5M9.500 7.500v5M14 3h4M16 1v4" stroke="#1432e6" /></Ico>],
  ["Ondas de impulso", <Ico><path d="M2 6l3 9 4-10 3 8 4-10" stroke="#6496fa" /><text x="0" y="7" fontSize="7" fontWeight="700" fill="#1432e6">1</text><text x="4" y="18" fontSize="7" fontWeight="700" fill="#1432e6">+2</text><text x="7" y="7" fontSize="7" fontWeight="700" fill="#1432e6">3</text><text x="12" y="14" fontSize="7" fontWeight="700" fill="#1432e6">+4</text></Ico>],
  ["Ondas correctivas", <Ico><path d="m4 12 5-7 6 9" stroke="#6496fa" /><text x="0" y="16" fontSize="8" fontWeight="700" fill="#1432e6">a+</text><text x="9" y="7" fontSize="8" fontWeight="700" fill="#1432e6">+b</text><text x="11" y="17" fontSize="8" fontWeight="700" fill="#1432e6">c+</text></Ico>],
  ["Validar", <Ico><path d="m3 9 3-1 2 4 7-9 2 1-8 13z" fill="#46cd3c" stroke="#14781e" strokeWidth=".8" /></Ico>],
  ["Me gusta", <Ico><path d="M3 8h3v8H3zM7 8l4-6c2 1 1 3 0 5h5c2 2 1 9-2 9H7z" fill="#46cd3c" stroke="#14781e" strokeWidth=".8" /></Ico>],
  ["Borrar", <Ico><path d="m3 5 3-3 4 4 4-4 3 3-4 4 4 4-3 3-4-4-4 4-3-3 4-4z" fill="#f01414" stroke="#961414" strokeWidth=".6" /></Ico>],
  ["Aviso", <Ico><path d="m10 0 8 16H2z" fill="#f0a03c" /></Ico>],
];

/* ------------------------------------------------------------------ */
/* Drawing helpers                                                     */
/* ------------------------------------------------------------------ */

const Line = (p) => <line {...p} />;
const Toned = ({ pts, w, tone }) =>
  pts.slice(1).map((p, i) => (
    <line key={i} x1={pts[i][0]} y1={pts[i][1]} x2={p[0]} y2={p[1]} stroke={tone(pts[i], p)} strokeWidth={w} strokeLinecap="round" />
  ));
const Marks = ({ pts, up, c, r = 5 }) =>
  pts.map(([x, y], i) => (
    <path key={i} fill={c} d={up ? `M${x} ${y - r}l${r} ${r * 2}h${-2 * r}z` : `M${x} ${y + r}l${r} ${-2 * r}h${-2 * r}z`} />
  ));
const Grid = ({ y1, y2, rows = [] }) => (
  <g stroke="#dcdcdc" strokeDasharray="1 4" shapeRendering="crispEdges">
    {MONTHS.map(([x]) => <Line key={x} x1={x + 0.5} x2={x + 0.5} y1={y1} y2={y2} />)}
    {rows.map((y) => <Line key={y} x1="28" x2={RIGHT} y1={y + 0.5} y2={y + 0.5} />)}
  </g>
);
const Frame = ({ y1, y2 }) => (
  <g stroke="#6f8b97" shapeRendering="crispEdges">
    <Line x1={RIGHT + 0.5} x2={RIGHT + 0.5} y1={y1} y2={y2} />
    <Line x1="28" x2="1914" y1={y2 - 0.5} y2={y2 - 0.5} />
  </g>
);
const Scale = ({ y, tick = y, children, box, c = "#000" }) => (
  <g>
    <Line x1={RIGHT} x2={RIGHT + 4} y1={tick + 0.5} y2={tick + 0.5} stroke={box ? c : "#6f8b97"} shapeRendering="crispEdges" />
    {box && <rect x="1877.500" y={Math.round(y) - 6.5} width={Math.min(box, 36)} height="13" fill="#f0f2f3" stroke="#6f8b97" />}
    <text x="1879" y={Math.round(y) + 3} fontSize="9" fontWeight="700" fill={c}>{children}</text>
  </g>
);
const Note = ({ x, y, w, h = 21, children, c = "#111", fill = "#fff", square }) => (
  <g>
    <rect x={x + 0.5} y={y + 0.5} width={w} height={h - 1} rx={square ? 0 : 3} fill={fill} stroke="#6496fa" />
    <text x={x + w / 2 + 0.5} y={y + (square ? 12 : 14)} fontSize={square ? 11 : 9} fontWeight={square === "bold" ? 700 : 400} textAnchor="middle" fill={c}>{children}</text>
  </g>
);
const Percent = ({ x, y, c, children }) => <text x={x} y={y} fontSize="9" fontWeight="700" fill={c}>{children}</text>;

const maTone = ([ax, ay], [bx, by]) => {
  const s = (by - ay) / (bx - ax);
  if (s > 1.6) return "#f00000";
  if (s > 0.6) return "#b40000";
  if (s > 0) return "#641e00";
  if (s > -0.6) return "#0a7814";
  if (s > -1.6) return "#00a80a";
  return "#00e000";
};

const DOTS = D("633,244 617,295 647,322 676,347 602,398 661,418 691,412 708,604 737,601 752,589 767,571 781,549 796,631 722,683 811,716 825,709 840,740 855,685 870,865 899,829 929,841 943,775 960,826 912,891 883,954");
const WAVE = [[28, 262], [359, 627], [365, 527], [371, 607], [468, 303], [506, 415], [614, 252], [680, 431], [989, 265], [1086, 489]];
const LOWS = [
  join(A("68,515 130,560 168,568 215,750 290,785 361,835 451,985"), D("540,73")),
  D("584,330 719,535 822,617 866,793"),
  J("1003,560 1069,650"),
  K("556,410 937,512"),
  K("955,592 1081,700"),
];
const PRICES = [[51, "1,22"], [94, "1,2"], [137, "1,18"], [181, ""], [224, "1,14"], [267, "1,12"], [310, "1,1"], [354, "1,08"], [397, "1,06"], [440, "1,04"], [484, "1,02"], [527, "1"], [570, "0,98"], [614, "0,96"]];

function PricePlot() {
  const samples = Array.from({ length: COUNT }, (_, i) => barX(i));
  return (
    <Plot viewBox="28 23 1886 632" preserveAspectRatio="xMinYMin meet" role="img" aria-label="EUR/USD semanal">
      <defs><clipPath id="price"><rect x="28" y="23" width="1844" height="632" /></clipPath></defs>
      <g clipPath="url(#price)">
        <rect x="28" y="265" width="417" height="247" fill="#e8ffe8" />
        <rect x="28" y="512" width="417" height="143" fill="#ebdfd6" />
        <rect x="596" y="440" width="558" height="44" fill="#dedcf8" />
        <rect x="596" y="484" width="558" height="56" fill="#e8ffe8" />
        <rect x="1414" y="284" width="285" height="48" fill="#dedcf8" />
        <rect x="1414" y="332" width="285" height="60" fill="#e8ffe8" />
        <Grid y1="23" y2="655" rows={PRICES.map((p) => p[0])} />
        <text x="38" y="58" fontSize="24" fontWeight="700">W</text>
        <text x="38" y="87" fontSize="24" fontWeight="700">EUR/USD</text>
        {BANDS.map(([f, a, b]) => <polygon key={f} points={`${str(a)} ${str([...b].reverse())}`} fill={f} />)}
        <rect x="1165" y="257" width="31" height="42" fill="#5ab45a" fillOpacity=".25" />
        <g stroke="#c8c8c8" strokeDasharray="1 3" fill="none">
          <polyline points="280,628 596,250" /><polyline points="614,254 1872,475" />
          <polyline points="596,628 1130,257 1195,187 1166,483" /><polyline points="1414,491 1696,77" />
        </g>
        <ellipse cx="387" cy="605" rx="106" ry="67" fill="#ff3c3c" fillOpacity=".22" stroke="#f08c8c" strokeOpacity=".7" />
        <ellipse cx="1087" cy="445" rx="146" ry="47" fill="#328c32" fillOpacity=".2" stroke="#78be78" strokeOpacity=".7" />
        <ellipse cx="1563" cy="316" rx="124" ry="28" fill="#f03c50" fillOpacity=".25" stroke="#e68ca0" />
        {samples.slice(1).map((x, i) => {
          const p = samples[i];
          const down = at(FAST, x) > at(SLOW, x);
          return <polygon key={i} points={`${p},${at(FAST, p)} ${x},${at(FAST, x)} ${x},${at(SLOW, x)} ${p},${at(SLOW, p)}`} fill={down ? "rgba(255,60,60,.22)" : "rgba(40,160,40,.18)"} />;
        })}
        <polyline points={str(SLOW)} fill="none" stroke="#a00014" strokeWidth="2" strokeDasharray="5 4" />
        {LONG.map(([c, pts], i) => <polyline key={i} points={str(pts)} fill="none" stroke={c} strokeWidth="4" strokeDasharray="7 7" />)}
        <Toned pts={FAST} w={3.6} tone={maTone} />
        <g stroke="#28aa28" fill="none">
          <Line x1="571" y1="453" x2="1872" y2="195" />
          <Line x1="280" y1="402" x2="1872" y2="90" strokeDasharray="5 3" />
          <Line x1="1269" y1="103" x2="1872" y2="275" strokeDasharray="5 3" />
          <Line x1="202" y1="614.5" x2="1872" y2="614.5" stroke="#149614" shapeRendering="crispEdges" />
        </g>
        <g fill="#aa3232" fillOpacity=".6">{DOTS.map(([x, y], i) => <circle key={i} cx={x} cy={y} r="3.4" />)}</g>
        <g shapeRendering="crispEdges">
          {CANDLES.map((c, i) => (
            <g key={i}>
              <rect x={c.x} y={c.h} width="1" height={Math.max(1, c.l - c.h)} />
              <rect x={c.x - 2} y={c.t} width="5" height={Math.max(1, c.b - c.t)} />
              {c.b - c.t > 2 && <rect x={c.x - 1} y={c.t + 1} width="3" height={c.b - c.t - 2} fill={c.ink} />}
            </g>
          ))}
        </g>
        {LOWS.map((pts, i) => <polyline key={i} points={str(pts)} fill="none" stroke="#148c14" />)}
        <g stroke="#a01414" fill="none">
          <polyline points={str(J("325,522 379,425"))} /><polyline points={str(J("397,418 634,323"))} /><polyline points={str(C("267,432 325,395"))} />
        </g>
        <polyline points={str(WAVE)} fill="none" stroke="#6496fa" />
        <Line x1="28" y1="51" x2="1335" y2="275" stroke="#0000ff" strokeWidth="3" />
        <Line x1="28" y1="265" x2={RIGHT} y2="265" stroke="#28aa28" strokeWidth="2" />
        <g stroke="#ff0000">
          <Line x1="28" y1="81.5" x2={RIGHT} y2="81.5" />
          <Line x1="1268" y1="122.5" x2={RIGHT} y2="122.5" />
          <Line x1="499" y1="272" x2="1763" y2="23" />
        </g>
        <Line x1="641" y1="112.5" x2={RIGHT} y2="112.5" stroke="#0000ff" strokeDasharray="1 2" />
        <Line x1="596" y1="439.5" x2="1154" y2="439.5" stroke="#fa8246" strokeDasharray="1 2" />
        <Line x1="1414" y1="283.5" x2="1699" y2="283.5" stroke="#fa8246" strokeDasharray="1 2" />
        <g stroke="#2828d2" strokeDasharray="20 8"><Line x1="596" y1="484.5" x2="1154" y2="484.5" /><Line x1="1414" y1="332.5" x2="1699" y2="332.5" /></g>
        <g stroke="#78f078" strokeDasharray="20 8">
          <Line x1="28" y1="511.5" x2="445" y2="511.5" /><Line x1="596" y1="539.5" x2="1154" y2="539.5" /><Line x1="1414" y1="392.5" x2="1699" y2="392.5" />
        </g>
        <g stroke="#e6dc00" strokeDasharray="5 3"><Line x1="1165" y1="256.5" x2="1196" y2="256.5" /></g>
        <g stroke="#32aa32" strokeDasharray="5 3"><Line x1="1165" y1="299.5" x2="1196" y2="299.5" /></g>
        <Percent x="1163" y="254" c="#d2c800">23,60 %</Percent>
        <Percent x="1163" y="296" c="#32aa32">38,20 %</Percent>
        <Percent x="219" y="262" c="#3232c8">61,80 %</Percent>
        <Percent x="219" y="508" c="#6ee66e">76,40 %</Percent>
        <Percent x="858" y="436" c="#fa8246">50,00 %</Percent>
        <Percent x="858" y="481" c="#3232dc">61,80 %</Percent>
        <Percent x="858" y="536" c="#6ee66e">76,40 %</Percent>
        <Percent x="1539" y="280" c="#fa8246">50,00 %</Percent>
        <Percent x="1539" y="329" c="#3232dc">61,80 %</Percent>
        <Percent x="1539" y="389" c="#6ee66e">76,40 %</Percent>
        <g stroke="#000" strokeWidth="2" strokeDasharray="2 4">
          <Line x1="1432" y1="169" x2="1492" y2="268" /><Line x1="1602" y1="275" x2="1700" y2="97" /><Line x1="1675" y1="251" x2="1872" y2="48" />
        </g>
        <path d="M1487 274l11-8v14zM1693 92l10-6 2 14z" />
        <rect x="595.500" y="97.500" width="45" height="15" fill="#fff" stroke="#0000dc" />
        <text x="618" y="109" fontSize="9" fontWeight="700" textAnchor="middle" fill="#1414dc">100,00 %</text>
        <Note x={669} y={160} w={21}>[1]</Note>
        <Note x={1396} y={47} w={21}>[v]</Note>
        <Note x={1421} y={30} w={21}>(1)</Note>
        <Note x={1446} y={87} w={142}>STRUCTURE CONFIRMATION</Note>
        <Note x={1560} y={304} w={21} fill="none">(2)</Note>
        <Note x={1160} y={158} w={22}>[iii]</Note>
        <Note x={1183} y={283} w={24} fill="none">[iv]</Note>
        <Note x={1089} y={385} w={18} fill="none">[i]</Note>
        <Note x={1107} y={463} w={20} fill="none">[ii]</Note>
        <Note x={1300} y={456} w={21}>[2]</Note>
        {[[607, 230, "5"], [462, 283, "3"], [498, 419, "4"], [359, 506, "1"], [365, 610, "2"], [353, 631, "5"]].map(([x, y, t], i) => (
          <Note key={i} x={x} y={y} w={12} h={17} square="bold" c="#6496fa">{t}</Note>
        ))}
        {[[673, 433, "A"], [983, 244, "B"], [1079, 492, "C"]].map(([x, y, t]) => (
          <Note key={t} x={x} y={y} w={13} h={17} square="plain" c="#6496fa">{t}</Note>
        ))}
        <text x="30" y="653" fontSize="9" fill="#000">IT-Finance.com - Tiempo Real</text>
      </g>
      <Frame y1={23} y2={655} />
      {PRICES.map(([y, t]) => <Scale key={y} y={y}>{t}</Scale>)}
      <Scale y={150} tick={152} box={36} c="#00d200">1,17311</Scale>
      <Scale y={163} tick={160} box={36} c="#961414">1,16956</Scale>
      <Scale y={177} tick={177} box={36} c="#0000a0">1,16160</Scale>
    </Plot>
  );
}

function TrainPlot() {
  const xs = Array.from({ length: COUNT }, (_, i) => barX(i));
  const area = (line, level, above) => `28,${level} ${str(line.map(([x, y]) => [x, above ? Math.min(y, level) : Math.max(y, level)]))} 1414,${level}`;
  return (
    <Plot viewBox="28 655 1886 99" preserveAspectRatio="xMinYMin meet" role="img" aria-label="Sistema de trenes">
      <Grid y1="655" y2="754" rows={[681, 698, 715, 732]} />
      <rect x="28" y="664" width="1386" height="17" fill="#d9f5d9" />
      <rect x="28" y="732" width="1386" height="18" fill="#fddad8" />
      {xs.slice(1).map((x, i) => {
        const p = xs[i];
        return <polygon key={i} points={`${p},${at(TRAIN, p)} ${x},${at(TRAIN, x)} ${x},${at(TRAIN_LAG, x)} ${p},${at(TRAIN_LAG, p)}`} fill={at(TRAIN, x) > at(TRAIN_LAG, x) ? "rgba(210,70,220,.35)" : "rgba(60,60,190,.35)"} />;
      })}
      <polygon points={area(TRAIN, 681, true)} fill="#289628" fillOpacity=".5" />
      <polygon points={area(TRAIN, 732, false)} fill="#8c3c14" fillOpacity=".5" />
      <g stroke="#000" shapeRendering="crispEdges">
        {[664, 681, 732, 750].map((y) => <Line key={y} x1="28" x2="1414" y1={y + 0.5} y2={y + 0.5} />)}
      </g>
      <Line x1="28" x2="1414" y1="707.5" y2="707.5" stroke="#0000a0" strokeWidth="2" strokeDasharray="5 3" />
      <polyline points={str(CYCLE.map(([x, y]) => [x + 2, y + 1]))} fill="none" stroke="#3c3c3c" strokeDasharray="3 3" strokeWidth=".8" />
      <polyline points={str(TRAIN_LAG)} fill="none" stroke="#1e1e1e" strokeWidth="3" strokeDasharray="5 4" />
      <Toned pts={TRAIN} w={4} tone={(a, b) => (b[1] > a[1] ? "#ff0000" : "#0000a0")} />
      <Toned pts={CYCLE} w={1.5} tone={(a, b) => (b[1] > a[1] ? "#dc1e1e" : "#000")} />
      <Marks pts={TRAIN_DOWN} c="#b40000" />
      <Marks pts={TRAIN_UP} up c="#0000b4" />
      <Frame y1={655} y2={754} />
      <Scale y={717} tick={715}>40</Scale>
      <Scale y={663} tick={664} box={17}>100</Scale>
      <Scale y={684} tick={681} box={13}>80</Scale>
      <Scale y={674} box={31}>87,351</Scale>
      <Scale y={709} tick={707} box={13} c="#0000a0">50</Scale>
      <Scale y={698} box={31}>59,778</Scale>
      <Scale y={732} box={13}>20</Scale>
      <Scale y={747} box={8}>0</Scale>
    </Plot>
  );
}

function WillyPlot() {
  const tone = (a, b) => {
    const y = (a[1] + b[1]) / 2;
    if (y < 781) return "#00c800";
    if (y > 817) return "#960000";
    return b[1] > a[1] ? "#ff9600" : "#0000dc";
  };
  const area = (level, above) => `28,${level} ${str(WILLY.map(([x, y]) => [x, above ? Math.min(y, level) : Math.max(y, level)]))} 1414,${level}`;
  return (
    <Plot viewBox="28 754 1886 85" preserveAspectRatio="xMinYMin meet" role="img" aria-label="Willy">
      <Grid y1="754" y2="839" rows={[776, 791, 806, 821]} />
      <g shapeRendering="crispEdges">
        {WILLY_BARS.map(([f, list]) => list.map(([a, b]) => <rect key={a} x={a} y="754" width={b - a} height="84" fill={f} />))}
      </g>
      <polygon points={area(780, true)} fill="#3c963c" fillOpacity=".5" />
      <polygon points={area(817, false)} fill="#781414" fillOpacity=".5" />
      <g stroke="#000" strokeDasharray="4 3" shapeRendering="crispEdges"><Line x1="28" x2="1412" y1="761.5" y2="761.5" /><Line x1="28" x2="1412" y1="835.5" y2="835.5" /></g>
      <Line x1="28" x2="1414" y1="780.5" y2="780.5" stroke="#1414a0" strokeWidth="2" />
      <Line x1="28" x2="1414" y1="798.5" y2="798.5" stroke="#1414a0" strokeWidth="2" strokeDasharray="5 4" />
      <Line x1="28" x2="1414" y1="817.5" y2="817.5" stroke="#c81e1e" strokeWidth="2" />
      <Toned pts={WILLY} w={3.8} tone={tone} />
      <Marks pts={H("110,445 317,445 421,445 541,445 717,445 987,445")} c="#b40000" />
      <Marks pts={join(G("1003,447"), H("275,447 333,455 515,447 661,447 765,447 1285,447"))} up c="#0000b4" />
      <Frame y1={754} y2={839} />
      <Scale y={806}>-60</Scale>
      <Scale y={761} box={8}>0</Scale>
      <Scale y={776} tick={778} box={34} c="#00c800">-22,852</Scale>
      <Scale y={785} tick={780} box={16} c="#0000a0">-25</Scale>
      <Scale y={798} box={16} c="#0000a0">-50</Scale>
      <Scale y={817} box={16} c="#c80000">-75</Scale>
      <Scale y={832} tick={835} box={20}>-100</Scale>
    </Plot>
  );
}

function AwesomePlot() {
  const zero = 894.5;
  return (
    <Plot viewBox="28 839 1886 99" preserveAspectRatio="xMinYMin meet" role="img" aria-label="Awesome Evolution">
      <Grid y1="839" y2="938" rows={[865, 924]} />
      {Array.from({ length: COUNT }, (_, i) => {
        const x = barX(i);
        const a = at(AO, x);
        const s = at(AO_SIGNAL, x);
        const rising = a < at(AO, x - STEP);
        const fill = a < zero ? (rising ? "#1414f0" : "#ff14f0") : rising ? "#14968c" : "#ff1414";
        return (
          <g key={i}>
            <rect x={x - 2} y={Math.min(a, s)} width="3.6" height={Math.abs(a - s)} fill={s > a ? "#e6ffe6" : "#ffe1e1"} stroke={s > a ? "#b4ebb4" : "#f5bebe"} strokeWidth=".7" />
            <rect x={x - 2} y={Math.min(a, zero)} width="4" height={Math.abs(a - zero)} fill={fill} stroke="#141432" strokeWidth=".6" />
          </g>
        );
      })}
      <Line x1="28" x2="1416" y1={zero} y2={zero} stroke="#1414f0" strokeWidth="2" />
      <Toned pts={AO} w={3.8} tone={(a, b) => (b[1] > a[1] ? "#b400b4" : "#000032")} />
      <Toned pts={AO_SIGNAL} w={3.8} tone={(a, b) => (b[1] > a[1] ? "#ff9600" : "#64ff64")} />
      <Marks pts={AO_UP} up c="#14f0fa" />
      <Marks pts={AO_DOWN} c="#fff000" />
      <Frame y1={839} y2={938} />
      <Scale y={865}>0,05</Scale>
      <Scale y={924}>-0,05</Scale>
      <Scale y={880} tick={886} box={31}>0,0140</Scale>
      <Scale y={889} box={31} c="#50e650">0,0082</Scale>
      <Scale y={901} tick={894} box={8} c="#1414dc">0</Scale>
    </Plot>
  );
}

function ForcePlot() {
  return (
    <Plot viewBox="28 938 1886 57" preserveAspectRatio="xMinYMin meet" role="img" aria-label="Barra Fuerza Fondo Mercado">
      <Grid y1="938" y2="995" rows={[944, 958, 972, 986]} />
      <g shapeRendering="crispEdges">
        {FORCE_BACK.map(([f, list]) => list.map(([a, b]) => <rect key={a} x={a} y="939" width={Math.min(b, 1418) - a} height="56" fill={f} />))}
        {Array.from({ length: COUNT }, (_, i) => {
          const x = barX(i) - 3;
          const y = at(FORCE, x + 3);
          const up = y < at(FORCE, x - 3) - 0.1;
          return (
            <g key={i}>
              <rect x={x} y={y} width={STEP} height={995 - y} fill={up ? "#1414d2" : "#f02814"} fillOpacity={up ? 0.7 : 0.62} />
              <rect x={x} y={y} width={STEP} height="2" fill={up ? "#000096" : "#960000"} fillOpacity=".45" />
              <rect x={x} y={y} width="2" height={995 - y} fill={up ? "#0000aa" : "#a00000"} fillOpacity=".4" />
            </g>
          );
        })}
        <Line x1="28" x2="1414" y1="972.5" y2="972.5" stroke="#000" />
      </g>
      <Frame y1={938} y2={995} />
      <Scale y={944}>0,50004</Scale>
      <Scale y={958}>0,50002</Scale>
      <Scale y={972} box={36}>0,50000</Scale>
      <Scale y={985} tick={983} box={36} c="#1414dc">0,49998</Scale>
    </Plot>
  );
}

function TimeAxis() {
  return (
    <Plot viewBox="28 995 1886 15" preserveAspectRatio="xMinYMin meet" role="img" aria-label="Eje temporal">
      {MONTHS.map(([x, t]) => (
        <g key={x}>
          <Line x1={x + 0.5} x2={x + 0.5} y1="995" y2="998" stroke="#6f8b97" />
          <text x={x} y="1008" fontSize={/^\d/.test(t) ? 10 : 9} fontWeight="700" textAnchor="middle">{t}</text>
        </g>
      ))}
    </Plot>
  );
}

/* ------------------------------------------------------------------ */
/* Page                                                                */
/* ------------------------------------------------------------------ */

const CloseMark = () => (
  <svg width="11" height="11" viewBox="0 0 11 11" aria-hidden="true">
    <circle cx="5.500" cy="5.500" r="5" fill="#3f6791" /><path d="m3.500 3.500 4 4m0-4-4 4" stroke="#fff" strokeWidth="1.400" />
  </svg>
);
const PanelLegend = ({ w, fill, children }) => (
  <Legend $h={16}>
    <LegendCell $w={16} $pad={2}><LegendButton aria-label={`Cerrar ${children}`}><CloseMark /></LegendButton></LegendCell>
    <LegendCell $w={w}><Swatch $fill={fill} />{children}</LegendCell>
  </Legend>
);
const Dropdown = ({ w, label, value }) => (
  <PickBox $w={w}>
    <Pick aria-label={label} defaultValue={value}><option>{value}</option></Pick>
    <Chevron />
  </PickBox>
);

const FRAMES = [["12s", 20], ["144s", 26], ["1m", 19], ["12m", 23], ["56m", 24], ["1h", 18], ["4h", 16], ["D", 13], ["W", 15], ["M", 13], ["Q", 14]];

export default function App() {
  return (
    <Page>
      <Global />
      <Toolbar>
        <Group $w={23} $pad={0} $justify="center">
          <IconButton aria-label="Tipo de gráfico">
            <Ico w={14} h={16}><path d="M2.500 6v9M7 3v9M11.500 0v10" stroke="#227828" /><path d="M1 8h3v5H1zM5.500 5H8.500v5h-3zM10 2h3v5h-3z" fill="#2d9632" /></Ico>
          </IconButton>
        </Group>
        <Group $w={16} $pad={0} $justify="center">
          <IconButton aria-label="Vincular" $w={12}>
            <Ico w={8} h={16}><g stroke="#6b7f88" fill="none"><rect x="1" y="1" width="2.500" height="6" rx="1" /><rect x="4.500" y="1" width="2.500" height="6" rx="1" /><rect x="1" y="9" width="2.500" height="6" rx="1" /><rect x="4.500" y="9" width="2.500" height="6" rx="1" /></g></Ico>
          </IconButton>
        </Group>
        <Group $w={62} $pad={0}><Dropdown w={60} label="Valor" value="EURUSD" /></Group>
        <Group $gap={3} $pad={4} $w={240}>
          {FRAMES.map(([t, w]) => <Chip key={t} $w={w} $on={t === "W"}>{t}</Chip>)}
        </Group>
        <Group $w={63} $pad={0}><Dropdown w={62} label="Unidad de tiempo" value="1 semana" /></Group>
        <Group $gap={4} $w={91}>
          {[["5kU", 20], ["10kU", 28], ["35kU", 28]].map(([t, w]) => <Chip key={t} $w={w} $on={t === "10kU"}>{t}</Chip>)}
        </Group>
        <Group $w={84} $pad={1}><Dropdown w={81} label="Histórico" value="10 k unidades" /></Group>
        <Group $w={86} $pad={5}>
          <TextButton>
            <Ico w={17} h={18}><path d="M0 4c3-4 6 2 9 4s5-1 8-5" stroke="#1e9632" strokeWidth="1.500" /><path d="M1 11 6 7l5-4 5 7" stroke="#e63232" /><path d="M1 13h2v5H1zM8 12h2v6H8zM15 13h2v5h-2z" fill="#e61e1e" /><path d="M4 13h3v5H4zM11 14h3v4h-3z" fill="#14be28" /></Ico>
            Indicadores
          </TextButton>
        </Group>
        <Group $w={13} $pad={0} $justify="center"><IconButton aria-label="Más indicadores" $w={12}><Chevron /></IconButton></Group>
        <Group $plain $pad={7} $gap={4}>
          <Ico w={10} h={12}><rect width="10" height="12" rx="1" fill="#e4ecf0" /><text x="5" y="10" fontSize="9" fontWeight="700" textAnchor="middle" fill="#7d8c94">i</text></Ico>
          <Ico w={14} h={12}><circle cx="8" cy="6" r="3.500" fill="#6f7a80" /></Ico>
          <Change>-0,98 %</Change>
          <When>30 ene 2026</When>
          <Ticker>EUR/USD</Ticker>
        </Group>
        <Spring />
        <Group $w={21} $pad={0} $justify="center">
          <IconButton aria-label="Actualizar" $w={18}>
            <Ico w={16} h={16}><path d="M9 2C5 1 3 4 3 8" stroke="#e63c32" strokeWidth="2.500" /><path d="M0 8h6l-3 4z" fill="#e63c32" /><path d="M7 14c4 1 6-2 6-6" stroke="#1eb428" strokeWidth="2.500" /><path d="M10 8h6l-3-4z" fill="#1eb428" /></Ico>
          </IconButton>
        </Group>
        <Group $plain $pad={1}>
          <IconButton aria-label="Minimizar" $w={14}><Ico w={9} h={9}><path d="M1 8h7" stroke="#7d909a" strokeWidth="1.500" /></Ico></IconButton>
          <IconButton aria-label="Restaurar" $w={14}><Ico w={9} h={9}><path d="M.5 3.500h5v5h-5zM3.500 3V.5h5v5H6" stroke="#7d909a" /></Ico></IconButton>
          <IconButton aria-label="Cerrar" $w={13}><Ico w={9} h={9}><path d="m1 1 7 7m0-7-7 7" stroke="#7d909a" strokeWidth="1.500" /></Ico></IconButton>
        </Group>
      </Toolbar>
      <Body>
        <Side aria-label="Herramientas de dibujo">
          <SideArrow $h={10} aria-label="Subir"><Chevron up c="#6b828d" /></SideArrow>
          <Tools>
            {TOOLS.map(([name, icon], i) => <Tool key={name} aria-label={name} $on={i === 0}>{icon}</Tool>)}
          </Tools>
          <SideArrow $h={12} $raised aria-label="Bajar"><Chevron /></SideArrow>
          <Tool aria-label="Objetos" $h={26}>
            <Ico w={20} h={22}><path d="M6 4h9v13H6z" fill="#eef2f4" stroke="#78868c" strokeWidth=".7" /><path d="M8 12h3v-4" stroke="#d23232" /><circle cx="5" cy="5" r="4.500" fill="#148c28" /><text x="5" y="8" fontSize="8" fontWeight="700" textAnchor="middle" fill="#fff">1</text><path d="m9 12 7 7M16 12l2 2-3 3" stroke="#111" strokeWidth="2" /><path d="m9 12 7 7" stroke="#fff" strokeWidth="1" /></Ico>
          </Tool>
          <Tool aria-label="Más herramientas" $h={28}>
            <Ico><path d="M3 6h3v3H3zM8 6h3v3H8zM13 6h3v3h-3z" fill="#2f4048" /><path d="M11 12h6l-3 4z" fill="#111" /></Ico>
          </Tool>
          <PencilTool aria-label="Dibujar" $h={20}>
            <Ico><path d="m2 4 4 11 4-9 3 9" stroke="#e63232" /><path d="m3 14 4-9" stroke="#1e9632" /><path d="m8 16 1-4 7-9 2 2-7 9z" fill="#ffd23c" stroke="#8c6414" strokeWidth=".8" /></Ico>
          </PencilTool>
        </Side>
        <Main>
          <Panel $grow={632}>
            <PricePlot />
            <Legend $h={15}>
              <LegendCell $w={44} $pad={3}>
                <LegendButton aria-label="Bajar panel"><Ico w={10} h={11}><rect x=".5" y=".5" width="9" height="10" fill="#f5f8fa" stroke="#8aa2ae" /><path d="M5 2v4" stroke="#e62828" strokeWidth="2" /><path d="M2 5h6L5 9z" fill="#e62828" /></Ico></LegendButton>
                <LegendButton aria-label="Subir panel"><Ico w={10} h={11}><rect x=".5" y=".5" width="9" height="10" fill="#f5f8fa" stroke="#8aa2ae" /><path d="M5 5v4" stroke="#28aa28" strokeWidth="2" /><path d="M2 6h6L5 2z" fill="#28aa28" /></Ico></LegendButton>
                <LegendButton aria-label="Cerrar panel"><CloseMark /></LegendButton>
              </LegendCell>
              <LegendCell $w={48}><CheckLabel><Check type="checkbox" />Precio</CheckLabel></LegendCell>
              <LegendCell $w={16}>
                <LegendButton aria-label="Lista"><Ico w={9} h={9}><path d="M3 1.500h6M3 4.500h6M3 7.500h6M0 1.500h2M0 4.500h2M0 7.500h2" stroke="#26363e" /></Ico></LegendButton>
              </LegendCell>
              <LegendCell $w={64}><CheckLabel><Check type="checkbox" />Cierre (W)</CheckLabel></LegendCell>
              <LegendCell $w={137}><Swatch $fill="#78909b" />Tunel Domenec v4 (t t t t t)</LegendCell>
              <LegendCell $w={115}><Swatch $fill="linear-gradient(90deg,#111 12%,#f01e1e 12% 30%,#1eb41e 30% 48%,#f01ef0 48% 64%,#14dcf0 64% 82%,#fff01e 82%)" />Control Total Doc v.6</LegendCell>
              <LegendCell $w={141}><Swatch $fill="#000" />Multi Avisos (3 f 3 1,5 70 f f)</LegendCell>
            </Legend>
          </Panel>
          <Panel $grow={99}><TrainPlot /><PanelLegend w={149} fill="linear-gradient(90deg,#78909b 45%,#000 45%)">Sistema de trenes Doc v4 (f f)</PanelLegend></Panel>
          <Panel $grow={85}><WillyPlot /><PanelLegend w={73} fill="#78909b">Willy Doc (t)</PanelLegend></Panel>
          <Panel $grow={99}><AwesomePlot /><PanelLegend w={126} fill="#78909b">Awesome Evolution Doc</PanelLegend></Panel>
          <Panel $grow={57}><ForcePlot /><PanelLegend w={175} fill="linear-gradient(90deg,#000 45%,#c8d2d7 45%)">Barra Fuerza Fondo Mercado v4 (f)</PanelLegend></Panel>
          <Panel $grow={15}><TimeAxis /></Panel>
          <Footer>
            <IconButton aria-label="Compartir" $w={20}><Ico w={16} h={16}><path d="m4 8 8-5M4 8l8 5" stroke="#f5f8fa" strokeWidth="1.500" /><g fill="#f5f8fa"><circle cx="3" cy="8" r="2.500" /><circle cx="12" cy="3" r="2.500" /><circle cx="12" cy="12" r="2.500" /></g><path d="M9 13h6l-3 3z" fill="#111" /></Ico></IconButton>
            <IconButton aria-label="Chat"><Ico w={16} h={16}><path d="M3 1h9v9H5l-2 2z" fill="#8cb4e6" stroke="#5a82b4" strokeWidth=".8" /><path d="M5 5h10v7h-1v3l-3-3H5z" fill="#326ed2" /><path d="M7 8.500h6" stroke="#fff" strokeWidth="1.500" strokeDasharray="1.500 1" /></Ico></IconButton>
            <IconButton aria-label="Informe"><Ico w={16} h={16}><path d="M3 1h10v14H3z" fill="#f5f7f8" stroke="#50646e" /><path d="M5 4h3M5 7h6M5 13h6" stroke="#50646e" /><path d="m5 11 2-2 3 3 2-3" stroke="#e62828" /><path d="M9 3h3v3H9z" fill="#1e9632" /></Ico></IconButton>
            <IconButton aria-label="Orden" $w={20}><Ico w={16} h={16}><path d="M2 1h6v3H2zM4 5h4v3H4zM2 9h6v3H2zM5 13h3v2H5z" fill="#e63228" /><path d="M8 1h4v3H8zM8 5h6v3H8zM8 9h4v3H8zM8 13h6v2H8z" fill="#1e9632" /></Ico></IconButton>
            <IconButton aria-label="Plantillas" $w={20}><Ico w={16} h={16}><rect x="1" y="1" width="9" height="8" fill="#f5f8fa" stroke="#2864b4" /><path d="M1 2h9" stroke="#2864b4" strokeWidth="2" /><rect x="5" y="6" width="10" height="9" fill="#f5f8fa" stroke="#2864b4" /><path d="M5 7h10" stroke="#2864b4" strokeWidth="2" /><path d="m6 13 2-3 2 3 3-4" stroke="#1e9632" /></Ico></IconButton>
            <IconButton aria-label="Contraer" $w={15}>«</IconButton>
            <Scroll>
              <ScrollEnd aria-label="Anterior"><Chevron side="left" /></ScrollEnd>
              <ScrollTrack />
              <ScrollThumb />
              <ScrollEnd aria-label="Siguiente"><Chevron side="right" /></ScrollEnd>
            </Scroll>
            <IconButton aria-label="Deshacer"><Ico w={16} h={16}><path d="M5 6h4c5 0 5 5 2 8" stroke="#1e6edc" strokeWidth="2.500" /><path d="M1 6l6-5v9z" fill="#1e6edc" /></Ico></IconButton>
            <IconButton aria-label="Rehacer"><Ico w={16} h={16}><path d="M11 6H7c-5 0-5 5-2 8" stroke="#7daad2" strokeWidth="2.500" /><path d="M15 6 9 1v9z" fill="#7daad2" /></Ico></IconButton>
            <IconButton aria-label="Ajustes"><Ico w={16} h={16}><path d="M10 1h5v12h-5z" fill="#28b43c" /><path d="M1 8h7v7H1z" fill="#e66464" /><path d="m3 13 9-9M9 3l3-1 2 2-1 3" stroke="#111" strokeWidth="3" /><path d="m3 13 9-9M9 3l3-1 2 2-1 3" stroke="#fff" strokeWidth="1.300" /></Ico></IconButton>
            <IconButton aria-label="Zoom automático"><Ico w={18} h={18}><Lens /><path d="M15 2v8M1 15h9M13 4l2-2 2 2M13 8l2 2 2-2M3 13l-2 2 2 2" stroke="#1e32d2" /></Ico></IconButton>
            <IconButton aria-label="Alejar"><Ico w={18} h={17}><Lens sign="-" c="#16242b" /></Ico></IconButton>
            <IconButton aria-label="Acercar"><Ico w={18} h={17}><Lens sign="+" c="#16242b" /></Ico></IconButton>
            <IconButton aria-label="Último dato" $w={16}><Ico w={14} h={16}><path d="M1 4h13" stroke="#222" strokeWidth="3" strokeDasharray="2 1" /><path d="M7 7v4" stroke="#1e6edc" strokeWidth="2" /><path d="M4 10h6l-3 4z" fill="#1e6edc" /></Ico></IconButton>
          </Footer>
        </Main>
      </Body>
    </Page>
  );
}
